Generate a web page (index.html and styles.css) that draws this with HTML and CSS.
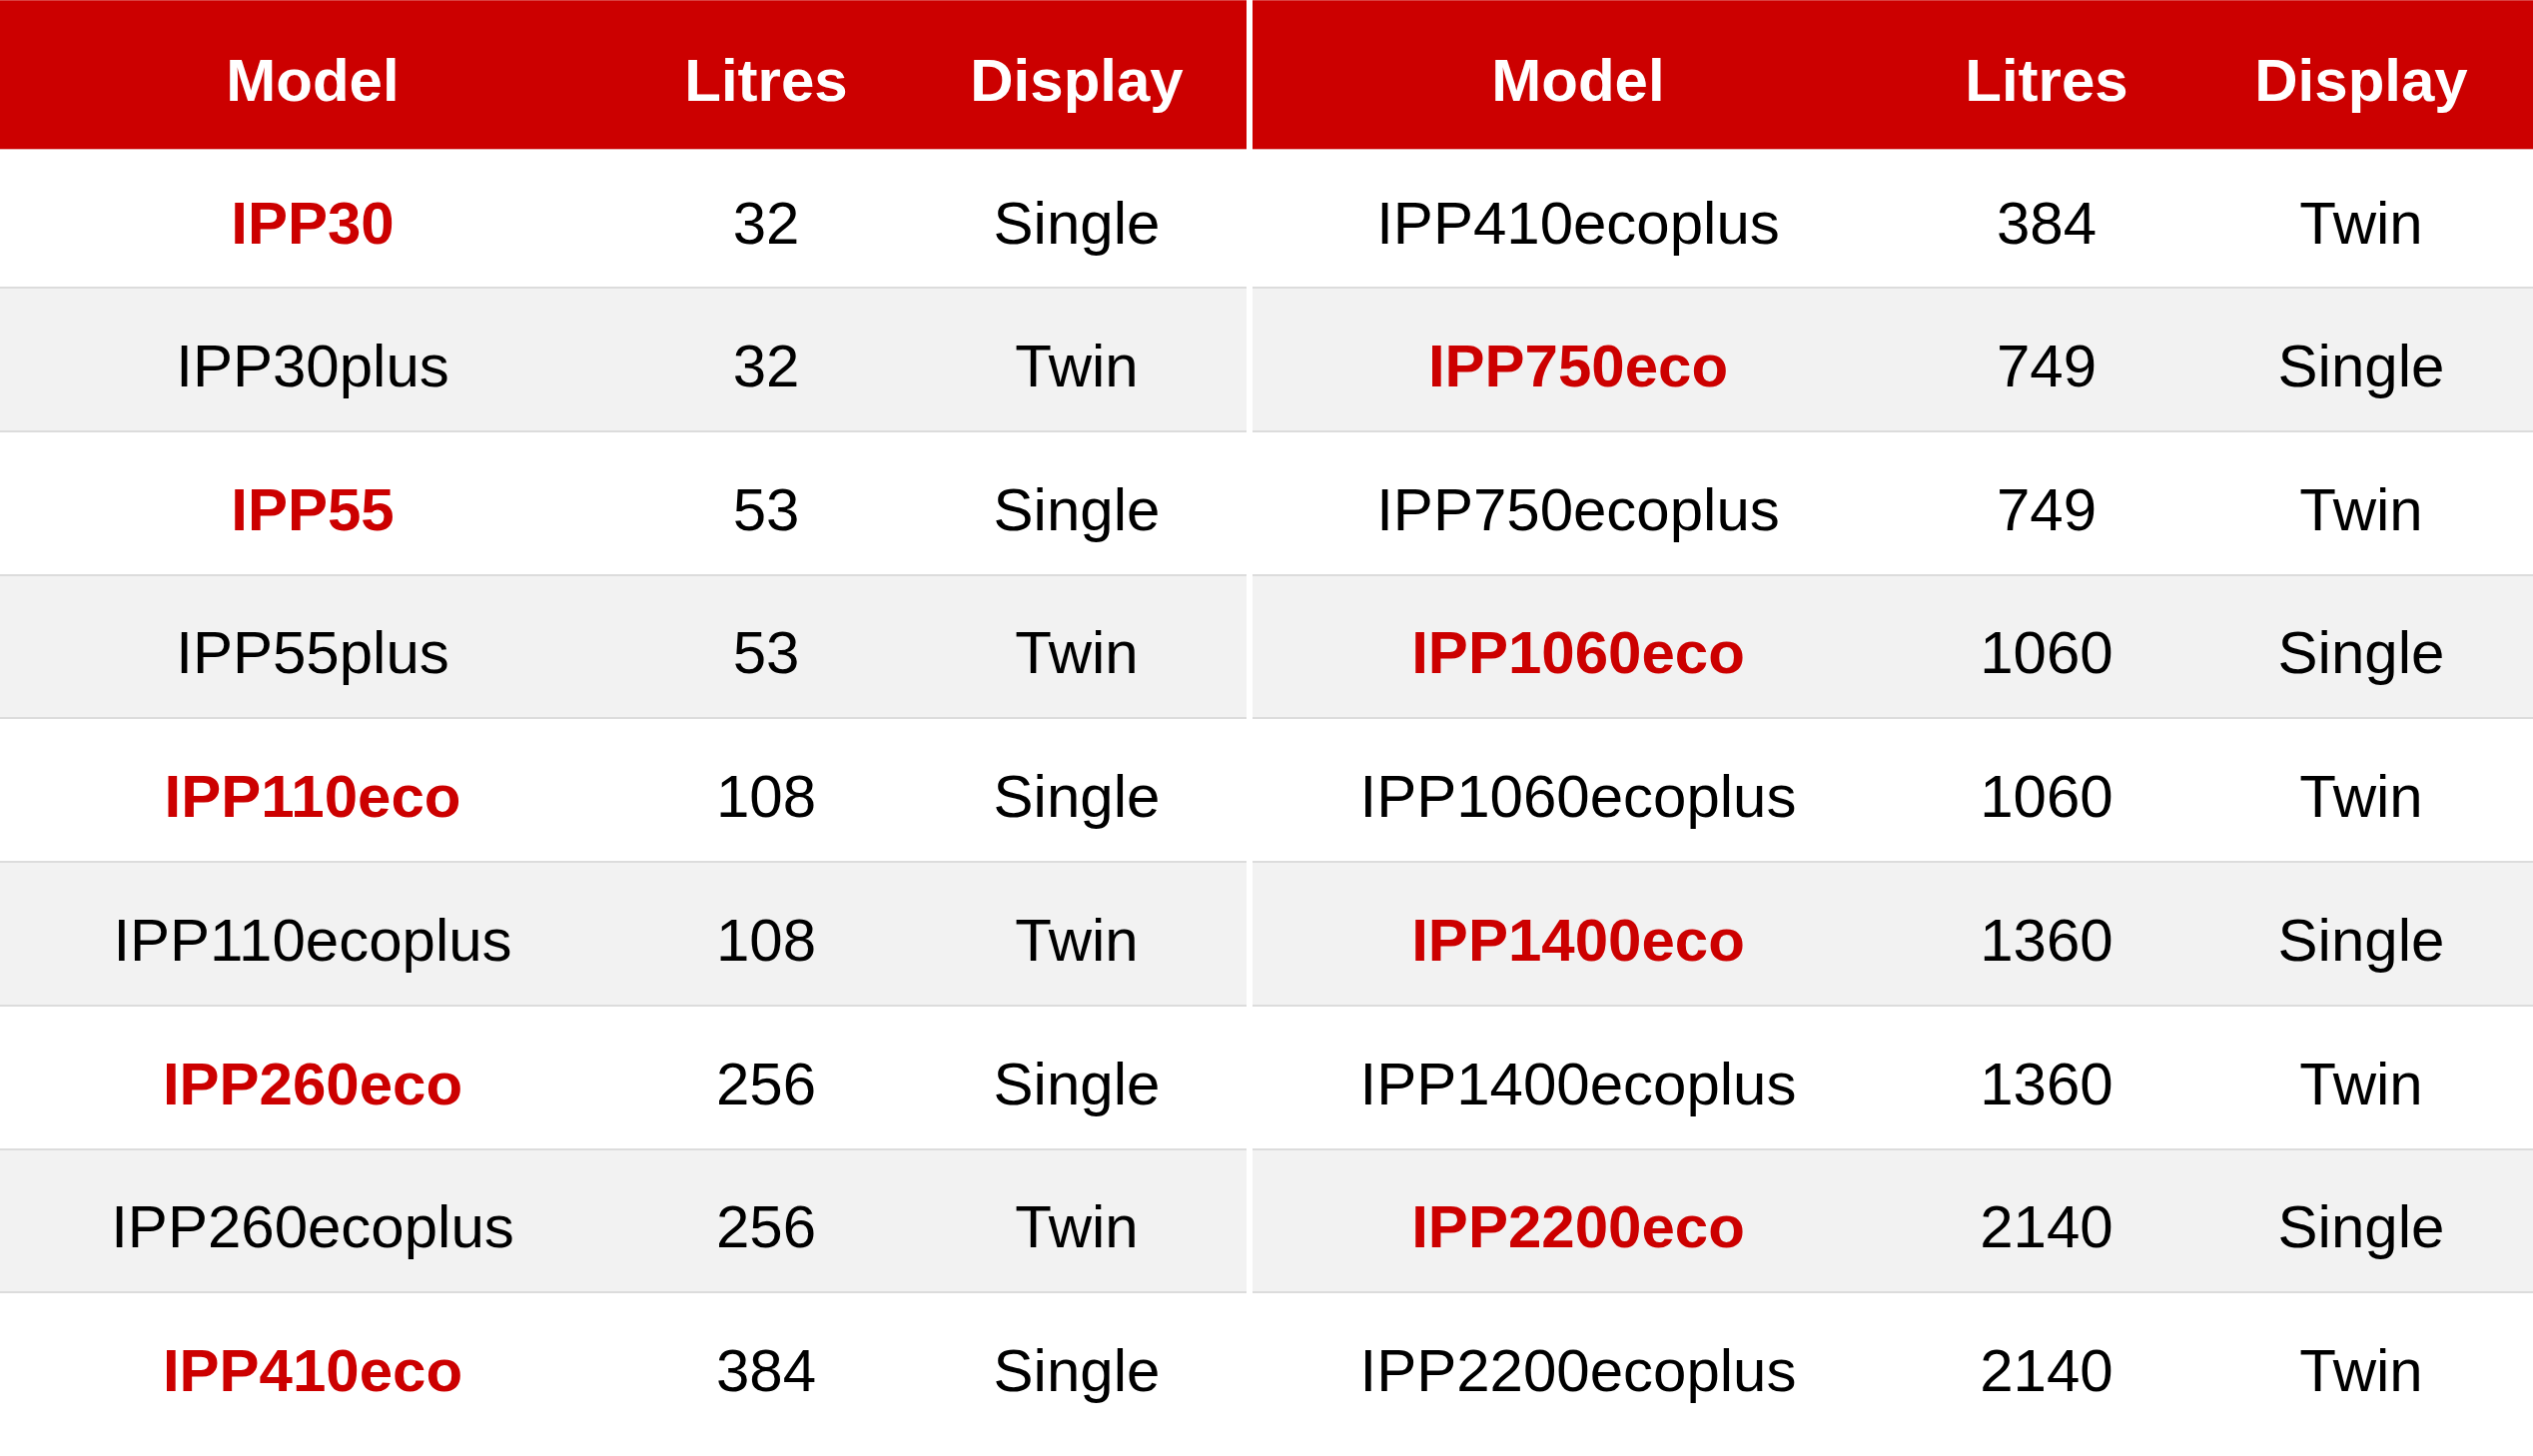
FILE: index.html
```html
<!DOCTYPE html>
<html lang="en">
<head>
<meta charset="utf-8">
<title>IPP models</title>
<link rel="stylesheet" href="styles.css">
</head>
<body>
<div class="tables">
  <div class="grid grid-left">
    <div class="cell head">Model</div><div class="cell head">Litres</div><div class="cell head">Display</div>
    <div class="cell r1 hl">IPP30</div><div class="cell r1">32</div><div class="cell r1">Single</div>
    <div class="cell alt">IPP30plus</div><div class="cell alt">32</div><div class="cell alt">Twin</div>
    <div class="cell hl">IPP55</div><div class="cell">53</div><div class="cell">Single</div>
    <div class="cell alt">IPP55plus</div><div class="cell alt">53</div><div class="cell alt">Twin</div>
    <div class="cell hl">IPP110eco</div><div class="cell">108</div><div class="cell">Single</div>
    <div class="cell alt">IPP110ecoplus</div><div class="cell alt">108</div><div class="cell alt">Twin</div>
    <div class="cell hl">IPP260eco</div><div class="cell">256</div><div class="cell">Single</div>
    <div class="cell alt">IPP260ecoplus</div><div class="cell alt">256</div><div class="cell alt">Twin</div>
    <div class="cell hl">IPP410eco</div><div class="cell">384</div><div class="cell">Single</div>
  </div>
  <div class="grid grid-right">
    <div class="cell head">Model</div><div class="cell head">Litres</div><div class="cell head">Display</div>
    <div class="cell r1">IPP410ecoplus</div><div class="cell r1">384</div><div class="cell r1">Twin</div>
    <div class="cell alt hl">IPP750eco</div><div class="cell alt">749</div><div class="cell alt">Single</div>
    <div class="cell">IPP750ecoplus</div><div class="cell">749</div><div class="cell">Twin</div>
    <div class="cell alt hl">IPP1060eco</div><div class="cell alt">1060</div><div class="cell alt">Single</div>
    <div class="cell">IPP1060ecoplus</div><div class="cell">1060</div><div class="cell">Twin</div>
    <div class="cell alt hl">IPP1400eco</div><div class="cell alt">1360</div><div class="cell alt">Single</div>
    <div class="cell">IPP1400ecoplus</div><div class="cell">1360</div><div class="cell">Twin</div>
    <div class="cell alt hl">IPP2200eco</div><div class="cell alt">2140</div><div class="cell alt">Single</div>
    <div class="cell">IPP2200ecoplus</div><div class="cell">2140</div><div class="cell">Twin</div>
  </div>
</div>
</body>
</html>
```
FILE: styles.css
```css
html, body {
  margin: 0;
  padding: 0;
  background: #ffffff;
}

body {
  font-family: "Liberation Sans", Arial, Helvetica, sans-serif;
  font-size: 60px;
  color: #000000;
}

.tables {
  display: flex;
  gap: 6px;
  width: 2536px;
}

.grid {
  display: grid;
  grid-template-rows: 150px 137px repeat(8, 143.75px);
}

.grid-left {
  width: 1248px;
  grid-template-columns: 626px 282px 340px;
}

.grid-right {
  flex: 1;
  grid-template-columns: 652px 286px 344px;
}

.cell {
  box-sizing: border-box;
  display: flex;
  align-items: center;
  justify-content: center;
  padding-top: 14px;
  line-height: 1;
  white-space: nowrap;
  border-top: 2px solid #dcdcdc;
  background: #ffffff;
}

.cell.head {
  background: #cc0000;
  color: #ffffff;
  font-weight: bold;
  border-top: 1px solid #d94040;
  border-bottom: 1px solid #e8b0b0;
  padding-top: 11px;
}

.cell.r1 {
  border-top: none;
  padding-top: 10px;
}

.cell.alt {
  background: #f2f2f2;
}

.cell.hl {
  color: #cc0000;
  font-weight: bold;
}
```
